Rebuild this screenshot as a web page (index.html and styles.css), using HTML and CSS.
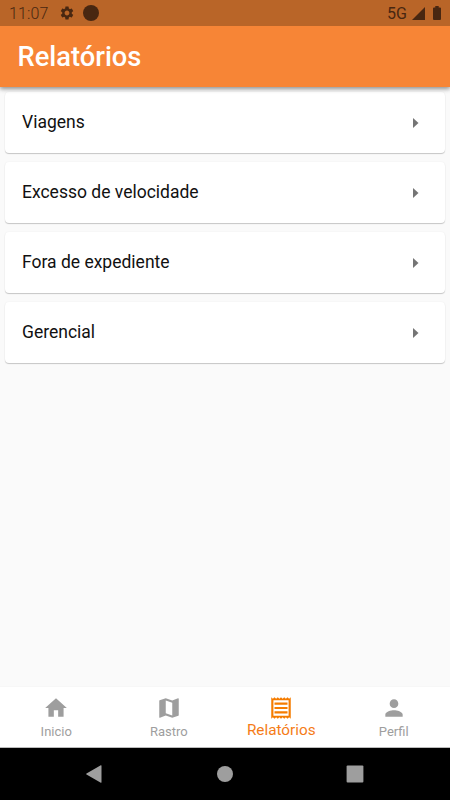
FILE: index.html
```html
<!DOCTYPE html>
<html lang="pt-BR">
<head>
<meta charset="utf-8">
<title>Relatórios</title>
<link rel="stylesheet" href="styles.css">
</head>
<body>
<div class="screen">
  <div class="status">
    <span class="time">11:07</span>
    <svg class="gear" viewBox="0 0 24 24"><path d="M19.14 12.94c.04-.3.06-.61.06-.94 0-.32-.02-.64-.07-.94l2.03-1.58a.49.49 0 0 0 .12-.61l-1.92-3.32a.488.488 0 0 0-.59-.22l-2.39.96c-.5-.38-1.03-.7-1.62-.94l-.36-2.54a.484.484 0 0 0-.48-.41h-3.84c-.24 0-.43.17-.47.41l-.36 2.54c-.59.24-1.13.57-1.62.94l-2.39-.96c-.22-.08-.47 0-.59.22L2.74 8.87c-.12.21-.08.47.12.61l2.03 1.58c-.05.3-.09.63-.09.94s.02.64.07.94l-2.03 1.58a.49.49 0 0 0-.12.61l1.92 3.32c.12.22.37.29.59.22l2.39-.96c.5.38 1.03.7 1.62.94l.36 2.54c.05.24.24.41.48.41h3.84c.24 0 .44-.17.47-.41l.36-2.54c.59-.24 1.13-.56 1.62-.94l2.39.96c.22.08.47 0 .59-.22l1.92-3.32c.12-.22.07-.47-.12-.61l-2.01-1.58zM12 15.6c-1.98 0-3.6-1.62-3.6-3.6s1.62-3.6 3.6-3.6 3.6 1.62 3.6 3.6-1.62 3.6-3.6 3.6z"/></svg>
    <span class="dot"></span>
    <span class="network">5G</span>
    <svg class="signal" viewBox="0 0 14 14"><path d="M14 0v14H0z"/></svg>
    <svg class="battery" viewBox="0 0 8 14"><path d="M2.3 0h3.4v1.4H7a1 1 0 0 1 1 1V13a1 1 0 0 1-1 1H1a1 1 0 0 1-1-1V2.400a1 1 0 0 1 1-1h1.300z"/></svg>
  </div>
  <header class="appbar"><h1>Relatórios</h1></header>
  <main class="list">
    <div class="card"><span>Viagens</span><svg class="arrow" viewBox="0 0 6 10"><path d="M0 0l5.500 5L0 10z"/></svg></div>
    <div class="card"><span>Excesso de velocidade</span><svg class="arrow" viewBox="0 0 6 10"><path d="M0 0l5.500 5L0 10z"/></svg></div>
    <div class="card"><span>Fora de expediente</span><svg class="arrow" viewBox="0 0 6 10"><path d="M0 0l5.500 5L0 10z"/></svg></div>
    <div class="card"><span>Gerencial</span><svg class="arrow" viewBox="0 0 6 10"><path d="M0 0l5.500 5L0 10z"/></svg></div>
  </main>
  <nav class="tabs">
    <div class="tab"><svg viewBox="0 0 24 24"><path d="M10 20v-6h4v6h5v-8h3L12 3 2 12h3v8z"/></svg><span>Inicio</span></div>
    <div class="tab"><svg viewBox="0 0 24 24"><path d="M20.500 3l-.16.030L15 5.100 9 3 3.360 4.900c-.21.070-.36.250-.36.480V20.500c0 .280.220.500.500.500l.16-.030L9 18.900l6 2.100 5.640-1.900c.210-.070.360-.250.360-.480V3.500c0-.280-.220-.500-.500-.500zM15 19l-6-2.110V5l6 2.110V19z"/></svg><span>Rastro</span></div>
    <div class="tab active"><svg viewBox="0 0 24 24"><path d="M19.500 3.500L18 2l-1.500 1.500L15 2l-1.500 1.500L12 2l-1.500 1.500L9 2 7.500 3.500 6 2 4.500 3.500 3 2v20l1.500-1.500L6 22l1.500-1.500L9 22l1.500-1.500L12 22l1.500-1.500L15 22l1.500-1.500L18 22l1.500-1.500L21 22V2l-1.500 1.500zM19 19.090H5V4.910h14v14.180zM6 15h12v2H6zm0-4h12v2H6zm0-4h12v2H6z"/></svg><span>Relatórios</span></div>
    <div class="tab"><svg viewBox="0 0 24 24"><path d="M12 12c2.210 0 4-1.790 4-4s-1.790-4-4-4-4 1.790-4 4 1.790 4 4 4zm0 2c-2.670 0-8 1.340-8 4v2h16v-2c0-2.660-5.330-4-8-4z"/></svg><span>Perfil</span></div>
  </nav>
  <div class="system">
    <svg viewBox="0 0 18 18"><path d="M15.500.700v16.600q0 .700-.700.400L.500 9.500q-.700-.500 0-1L14.800.300q.700-.300.700.400z"/></svg>
    <svg viewBox="0 0 18 18"><circle cx="9" cy="9" r="8"/></svg>
    <svg viewBox="0 0 18 18"><rect x=".6" y=".6" width="16.800" height="16.800" rx="1"/></svg>
  </div>
</div>
</body>
</html>
```
FILE: styles.css
```css
* { box-sizing: border-box; }
body { margin: 0; font-family: Roboto, sans-serif; }
svg { display: block; flex: none; }
.screen { width: 450px; height: 800px; display: flex; flex-direction: column; background: #fafafa; overflow: hidden; }
.status { height: 26px; flex: none; display: flex; align-items: center; padding: 0 9px 0 9px; background: #b96528; color: #482711; fill: #482711; z-index: 2; }
.time { width: 50px; font-size: 16px; font-weight: 300; letter-spacing: .1px; line-height: 18px; padding-top: 2px; }
.gear { width: 16px; height: 16px; }
.dot { width: 16px; height: 16px; border-radius: 50%; background: #482711; margin-left: 8px; }
.network { margin-left: auto; font-size: 16px; line-height: 18px; padding-top: 2px; }
.signal { width: 13px; height: 13px; margin-left: 5px; }
.battery { width: 8px; height: 14px; margin-left: 8px; }
.appbar { height: 61px; flex: none; display: flex; align-items: center; padding-left: 17.500px; background: #f78536; box-shadow: 0 2px 4px rgba(0,0,0,.3), 0 1px 6px rgba(0,0,0,.2); z-index: 1; }
h1 { margin: 0; color: #fff; font-size: 27.300px; font-weight: 500; line-height: 32px; }
.list { flex: 1; display: flex; flex-direction: column; gap: 9px; padding: 92px 5px 0; margin-top: -87px; }
.card { height: 61px; flex: none; display: flex; align-items: center; justify-content: space-between; padding: 0 26px 1px 17px; border-radius: 4px; background: #fff; box-shadow: 0 1px 1px rgba(0,0,0,.2), 0 0 2px rgba(0,0,0,.06); color: #111; font-size: 17.500px; line-height: 20px; }
.arrow { width: 6px; height: 10px; margin-top: 1.400px; fill: #757575; }
.tabs { height: 62px; flex: none; display: flex; background: #fff; border-bottom: 1px solid #bbb; border-top: 1px solid #f7f7f7; }
.tab { flex: 1; display: flex; flex-direction: column; align-items: center; padding-top: 8px; color: #9e9e9e; fill: #9e9e9e; font-size: 13px; line-height: 18px; }
.tab svg { width: 26px; height: 26px; }
.tab span { margin-top: 2px; }
.active { color: #f57c17; fill: #f57c00; font-size: 15.300px; }
.tab.active span { margin-top: 0; }
.system { height: 52px; flex: none; display: flex; align-items: center; justify-content: space-around; padding: 0 30px; background: #000; fill: #9e9e9e; }
.system svg { width: 18px; height: 18px; }
```
